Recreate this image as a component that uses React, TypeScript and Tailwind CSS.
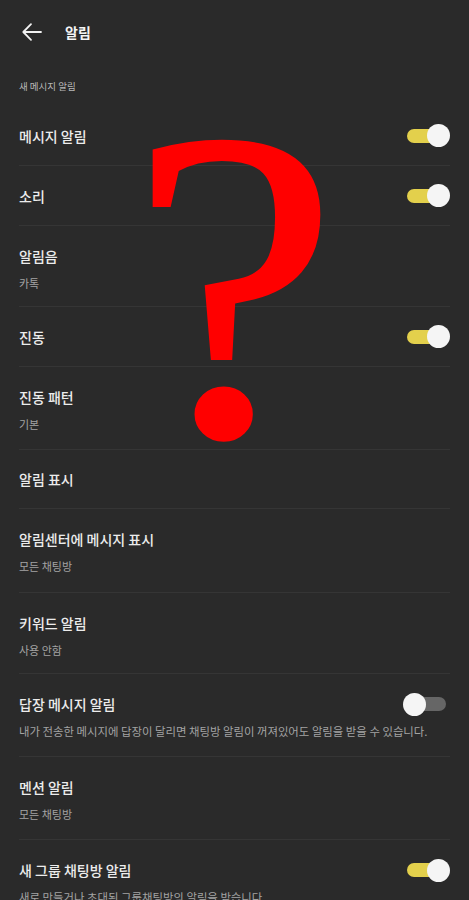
import React from "react";

const font = { fontFamily: '"Noto Sans CJK KR", "Noto Sans", sans-serif' };

function Toggle({ on }: { on: boolean }) {
  if (on) {
    return (
      <div className="relative w-[43px] h-[23px] shrink-0">
        <div className="absolute left-0 top-[4.5px] w-[37px] h-[14px] rounded-full bg-[#e3d04c]" />
        <div className="absolute right-0 top-0 w-[23px] h-[23px] rounded-full bg-[#f5f5f5]" />
      </div>
    );
  }
  return (
    <div className="relative w-[43px] h-[23px] shrink-0 mr-[4px]">
      <div className="absolute left-[4px] right-0 top-[4.5px] h-[14px] rounded-full bg-[#666666]" />
      <div className="absolute left-0 top-0 w-[23px] h-[23px] rounded-full bg-[#f5f5f5]" />
    </div>
  );
}

type Row = {
  title: string;
  sub?: string;
  long?: boolean;
  toggle?: boolean;
  h: string;
  last?: boolean;
};

function SettingRow({ title, sub, long, toggle, h, last }: Row) {
  const border = last ? "" : "border-b border-[#353535]";
  if (!sub) {
    return (
      <div className={`mx-[19px] flex items-center justify-between ${h} ${border}`}>
        <span className="text-[14px] leading-[20px] font-medium text-[#ececec]">{title}</span>
        {toggle !== undefined && <Toggle on={toggle} />}
      </div>
    );
  }
  return (
    <div className={`mx-[19px] flex flex-col pt-[20px] ${h} ${border}`}>
      <div className="flex items-center justify-between h-[20px]">
        <span className="text-[14px] leading-[20px] font-medium text-[#ececec]">{title}</span>
        {toggle !== undefined && <Toggle on={toggle} />}
      </div>
      <span
        className={`mt-[9px] leading-[17px] text-[#a3a3a3] whitespace-nowrap ${long ? "text-[11.4px]" : "text-[11px]"}`}
      >
        {sub}
      </span>
    </div>
  );
}

export default function App() {
  const rows: Row[] = [
    { title: "메시지 알림", toggle: true, h: "h-[60px]" },
    { title: "소리", toggle: true, h: "h-[60px]" },
    { title: "알림음", sub: "카톡", h: "h-[81px]" },
    { title: "진동", toggle: true, h: "h-[60px]" },
    { title: "진동 패턴", sub: "기본", h: "h-[83px]" },
    { title: "알림 표시", h: "h-[59px]" },
    { title: "알림센터에 메시지 표시", sub: "모든 채팅방", h: "h-[84px]" },
    { title: "키워드 알림", sub: "사용 안함", h: "h-[81px]" },
    {
      title: "답장 메시지 알림",
      sub: "내가 전송한 메시지에 답장이 달리면 채팅방 알림이 꺼져있어도 알림을 받을 수 있습니다.",
      long: true,
      toggle: false,
      h: "h-[83px]",
    },
    { title: "멘션 알림", sub: "모든 채팅방", h: "h-[83px]" },
    {
      title: "새 그룹 채팅방 알림",
      sub: "새로 만들거나 초대된 그룹채팅방의 알림을 받습니다.",
      long: true,
      toggle: true,
      h: "h-[83px]",
      last: true,
    },
  ];

  return (
    <div className="relative w-[469px] h-[900px] overflow-hidden bg-[#2a2a2a]" style={font}>
      <div className="h-[64px] flex items-center">
        <svg className="ml-[22px]" width="20" height="20" viewBox="0 0 20 20" fill="none">
          <path d="M19 10H1.5M9 2.2L1.3 10L9 17.8" stroke="#f2f2f2" strokeWidth="1.8" strokeLinecap="round" strokeLinejoin="round" />
        </svg>
        <span className="ml-[23px] text-[14px] font-bold text-[#f4f4f4] leading-[20px]">알림</span>
      </div>
      <div className="mt-[15px] ml-[19px] text-[9.5px] leading-[14px] text-[#b8b8b8]">새 메시지 알림</div>
      <div className="mt-[13px]">
        {rows.map((r) => (
          <SettingRow key={r.title} {...r} />
        ))}
      </div>
      <div
        className="absolute left-[130px] top-[64px] text-[442px] leading-none text-[#ff0000] pointer-events-none origin-top-left scale-x-[1.06] [-webkit-text-stroke:3px_#ff0000]"
        style={{ fontFamily: '"Liberation Serif", serif' }}
      >
        ?
      </div>
    </div>
  );
}
